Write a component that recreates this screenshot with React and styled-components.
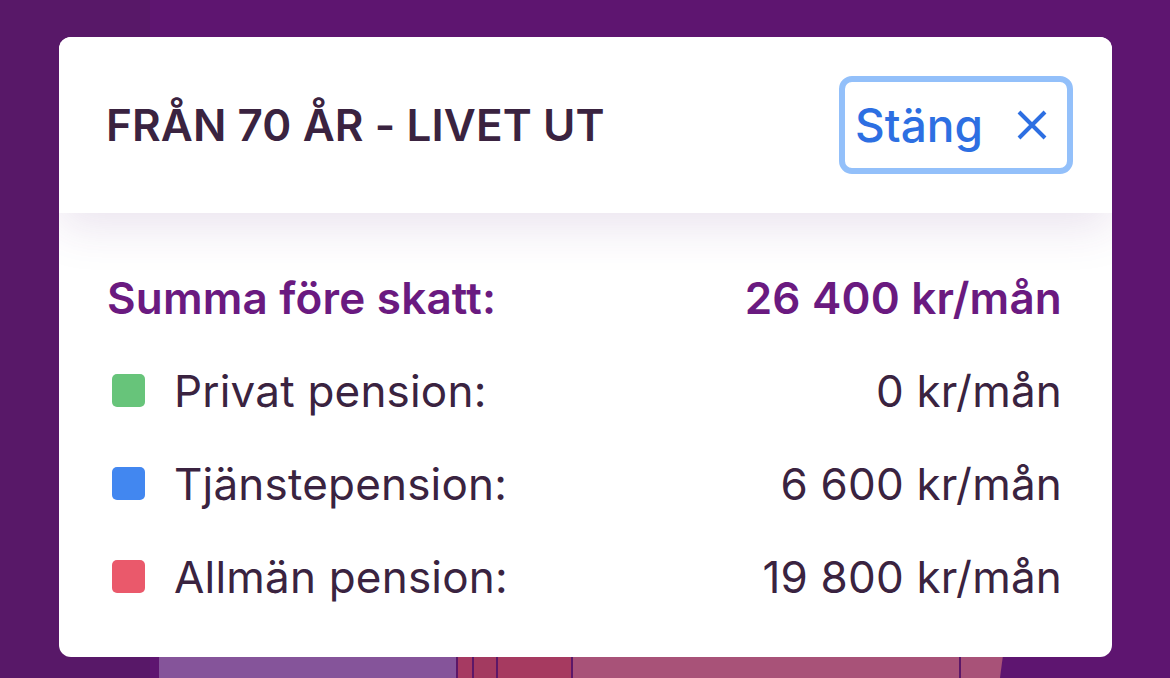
import React from "react";
import styled, { createGlobalStyle } from "styled-components";

const GlobalStyle = createGlobalStyle`
  html, body {
    margin: 0;
    padding: 0;
    background: #5c1768;
  }
  body {
    font-family: Inter, "Noto Sans", sans-serif;
    -webkit-font-smoothing: antialiased;
  }
`;

const Page = styled.div`
  position: relative;
  width: 1170px;
  height: 678px;
  overflow: hidden;
  background: linear-gradient(to right, #581868 0, #581868 150px, #5e1570 150px);
`;

// chart behind the modal, only its top edge shows under the card
const Chart = styled.div`
  display: flex;
  padding: 640px 0 0 159px;
`;

const Bar = styled.div`
  box-sizing: border-box;
  height: 60px;
  width: ${(p) => p.w}px;
  background: ${(p) => p.color};
  border-right: 2px solid #5c1768;
  clip-path: ${(p) => (p.slant ? "polygon(0 0, 100% 0, 82% 100%, 0 100%)" : "none")};
`;

const Modal = styled.div`
  position: absolute;
  top: 37px;
  left: 59px;
  width: 1053px;
  height: 620px;
  background: #fff;
  border-radius: 12px;
  overflow: hidden;
  display: flex;
  flex-direction: column;
`;

const Header = styled.div`
  position: relative;
  z-index: 1;
  height: 176px;
  flex-shrink: 0;
  display: flex;
  align-items: center;
  justify-content: space-between;
  padding: 0 39px 0 47px;
  background: #fff;
  box-shadow: 0 14px 44px rgba(96, 40, 120, 0.13);
`;

const Title = styled.h1`
  margin: 0;
  font-size: 44px;
  font-weight: 600;
  letter-spacing: 0.1px;
  color: #3a2340;
`;

const CloseButton = styled.button`
  display: flex;
  align-items: center;
  gap: 34px;
  height: 98px;
  box-sizing: border-box;
  padding: 0 20px 0 10px;
  border: 6px solid #93c0fa;
  border-radius: 13px;
  background: #fff;
  color: #2d6fe2;
  font-family: inherit;
  font-size: 46px;
  font-weight: 500;
  cursor: pointer;
`;

const Body = styled.div`
  display: flex;
  flex-direction: column;
  padding: 38px 50px 0 48px;
`;

const Row = styled.div`
  display: flex;
  align-items: center;
  justify-content: space-between;
  height: 93px;
  font-size: 44px;
  letter-spacing: 0.2px;
  font-weight: ${(p) => (p.total ? 600 : 400)};
  color: ${(p) => (p.total ? "#6a1a80" : "#3a2340")};
`;

const Label = styled.div`
  display: flex;
  align-items: center;
  gap: 29px;
`;

const Swatch = styled.span`
  width: 33px;
  height: 33px;
  margin-left: 5px;
  border-radius: 5px;
  background: ${(p) => p.color};
`;

const CloseIcon = () => (
  <svg width="30" height="30" viewBox="0 0 30 30">
    <path d="M2 2 L28 28 M28 2 L2 28" stroke="#2d6fe2" strokeWidth="4" />
  </svg>
);

const rows = [
  { color: "#67c47a", label: "Privat pension:", value: "0 kr/mån" },
  { color: "#4287f0", label: "Tjänstepension:", value: "6 600 kr/mån" },
  { color: "#ea596b", label: "Allmän pension:", value: "19 800 kr/mån" },
];

const bars = [
  { w: 299, color: "#85549a" },
  { w: 16, color: "#a63a62" },
  { w: 24, color: "#a33a60" },
  { w: 75, color: "#a63a60" },
  { w: 388, color: "#a85278" },
  { w: 44, color: "#a85278", slant: true },
];

export default function App() {
  return (
    <Page>
      <GlobalStyle />
      <Chart>
        {bars.map((b, i) => (
          <Bar key={i} w={b.w} color={b.color} slant={b.slant} />
        ))}
      </Chart>
      <Modal>
        <Header>
          <Title>FRÅN 70 ÅR - LIVET UT</Title>
          <CloseButton>
            Stäng
            <CloseIcon />
          </CloseButton>
        </Header>
        <Body>
          <Row total>
            <span>Summa före skatt:</span>
            <span>26 400 kr/mån</span>
          </Row>
          {rows.map((r) => (
            <Row key={r.label}>
              <Label>
                <Swatch color={r.color} />
                {r.label}
              </Label>
              <span>{r.value}</span>
            </Row>
          ))}
        </Body>
      </Modal>
    </Page>
  );
}
